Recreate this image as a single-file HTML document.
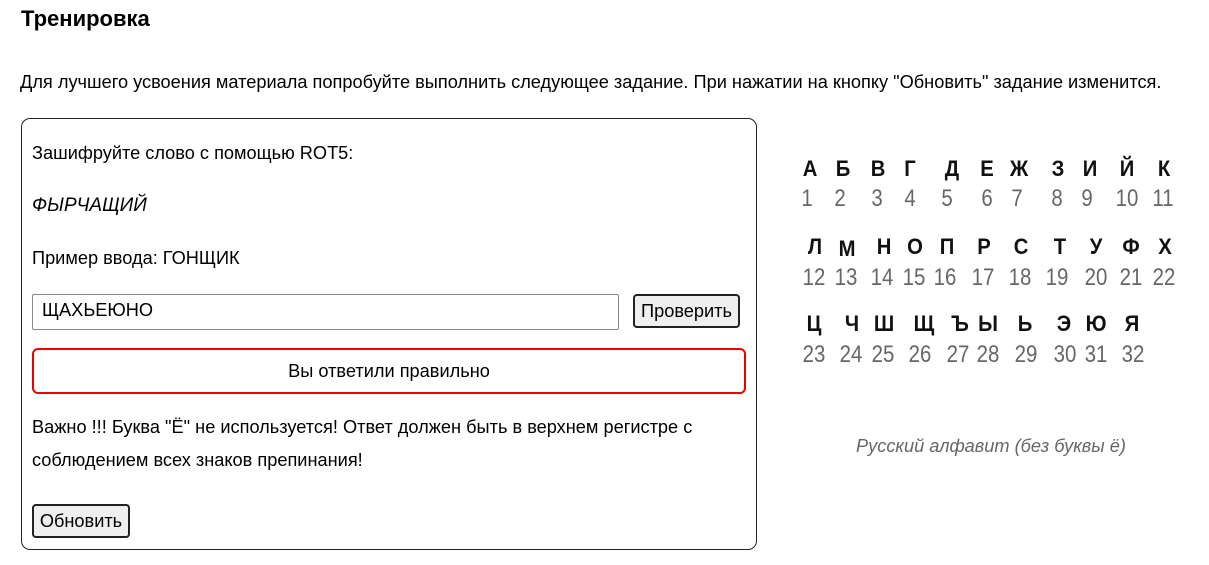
<!DOCTYPE html>
<html><head><meta charset="utf-8"><style>
body{margin:0;width:1209px;height:565px;background:#fff;font-family:"Liberation Sans",Arial,sans-serif;color:#000;position:relative;overflow:hidden}
.a{position:absolute;white-space:nowrap}
h1{position:absolute;left:21px;top:6px;margin:0;font-size:22px;font-weight:bold}
.box{position:absolute;left:21px;top:118px;width:734px;height:430px;border:1px solid #222;border-radius:9px}
.inp{position:absolute;left:32px;top:294px;width:585px;height:34px;border:1px solid #888;border-radius:2px}
.btn{position:absolute;border:2px solid #222;border-radius:4px;background:#efefef;font-size:18.2px;text-align:center}
.res{position:absolute;left:32px;top:348px;width:710px;height:42px;border:2px solid #e00;border-radius:6px;text-align:center;line-height:42px;font-size:18.2px}
.l{position:absolute;transform:translateX(-50%) scaleX(0.92);font-size:22px;font-weight:bold;color:#111}
.n{position:absolute;transform:translateX(-50%) scaleX(0.85);font-size:24px;color:#666}
.t{font-size:18.2px}
</style></head><body>
<h1>Тренировка</h1>
<div class="a t" style="left:20px;top:72px">Для лучшего усвоения материала попробуйте выполнить следующее задание. При нажатии на кнопку "Обновить" задание изменится.</div>
<div class="box"></div>
<div class="a t" style="left:32px;top:143px">Зашифруйте слово с помощью ROT5:</div>
<div class="a" style="left:32px;top:195px;font-size:19px;font-style:italic">ФЫРЧАЩИЙ</div>
<div class="a t" style="left:32px;top:248px">Пример ввода: ГОНЩИК</div>
<div class="inp"></div>
<div class="a t" style="left:42px;top:300px">ЩАХЬЕЮНО</div>
<div class="btn" style="left:633px;top:294px;width:103px;height:30px;line-height:30px">Проверить</div>
<div class="res">Вы ответили правильно</div>
<div class="a t" style="left:32px;top:417px">Важно !!! Буква "Ё" не используется! Ответ должен быть в верхнем регистре с</div>
<div class="a t" style="left:32px;top:450px">соблюдением всех знаков препинания!</div>
<div class="btn" style="left:32px;top:504px;width:94px;height:30px;line-height:30px">Обновить</div>
<div class="a" style="left:856px;top:436px;font-size:18.2px;font-style:italic;color:#666">Русский алфавит (без буквы ё)</div>

<div class="l" style="left:810px;top:156px">А</div><div class="l" style="left:843px;top:156px">Б</div><div class="l" style="left:878px;top:156px">В</div><div class="l" style="left:910px;top:156px">Г</div><div class="l" style="left:952px;top:156px">Д</div><div class="l" style="left:987px;top:156px">Е</div><div class="l" style="left:1019px;top:156px">Ж</div><div class="l" style="left:1058px;top:156px">З</div><div class="l" style="left:1090px;top:156px">И</div><div class="l" style="left:1127px;top:156px">Й</div><div class="l" style="left:1164px;top:156px">К</div>
<div class="n" style="left:807px;top:185px">1</div><div class="n" style="left:840px;top:185px">2</div><div class="n" style="left:877px;top:185px">3</div><div class="n" style="left:910px;top:185px">4</div><div class="n" style="left:947px;top:185px">5</div><div class="n" style="left:987px;top:185px">6</div><div class="n" style="left:1017px;top:185px">7</div><div class="n" style="left:1057px;top:185px">8</div><div class="n" style="left:1087px;top:185px">9</div><div class="n" style="left:1127px;top:185px">10</div><div class="n" style="left:1163px;top:185px">11</div>

<div class="l" style="left:815px;top:234px">Л</div><div class="l" style="left:847px;top:236px">М</div><div class="l" style="left:884px;top:234px">Н</div><div class="l" style="left:915px;top:234px">О</div><div class="l" style="left:947px;top:234px">П</div><div class="l" style="left:984px;top:234px">Р</div><div class="l" style="left:1021px;top:234px">С</div><div class="l" style="left:1060px;top:234px">Т</div><div class="l" style="left:1096px;top:234px">У</div><div class="l" style="left:1131px;top:234px">Ф</div><div class="l" style="left:1165px;top:234px">Х</div>
<div class="n" style="left:814px;top:264px">12</div><div class="n" style="left:846px;top:264px">13</div><div class="n" style="left:882px;top:264px">14</div><div class="n" style="left:914px;top:264px">15</div><div class="n" style="left:945px;top:264px">16</div><div class="n" style="left:983px;top:264px">17</div><div class="n" style="left:1020px;top:264px">18</div><div class="n" style="left:1057px;top:264px">19</div><div class="n" style="left:1096px;top:264px">20</div><div class="n" style="left:1131px;top:264px">21</div><div class="n" style="left:1164px;top:264px">22</div>

<div class="l" style="left:814px;top:311px">Ц</div><div class="l" style="left:852px;top:311px">Ч</div><div class="l" style="left:884px;top:311px">Ш</div><div class="l" style="left:924px;top:311px">Щ</div><div class="l" style="left:960px;top:311px">Ъ</div><div class="l" style="left:988px;top:311px">Ы</div><div class="l" style="left:1025px;top:311px">Ь</div><div class="l" style="left:1064px;top:311px">Э</div><div class="l" style="left:1096px;top:311px">Ю</div><div class="l" style="left:1132px;top:311px">Я</div>
<div class="n" style="left:814px;top:341px">23</div><div class="n" style="left:851px;top:341px">24</div><div class="n" style="left:883px;top:341px">25</div><div class="n" style="left:920px;top:341px">26</div><div class="n" style="left:958px;top:341px">27</div><div class="n" style="left:988px;top:341px">28</div><div class="n" style="left:1026px;top:341px">29</div><div class="n" style="left:1065px;top:341px">30</div><div class="n" style="left:1096px;top:341px">31</div><div class="n" style="left:1133px;top:341px">32</div>
</body></html>
